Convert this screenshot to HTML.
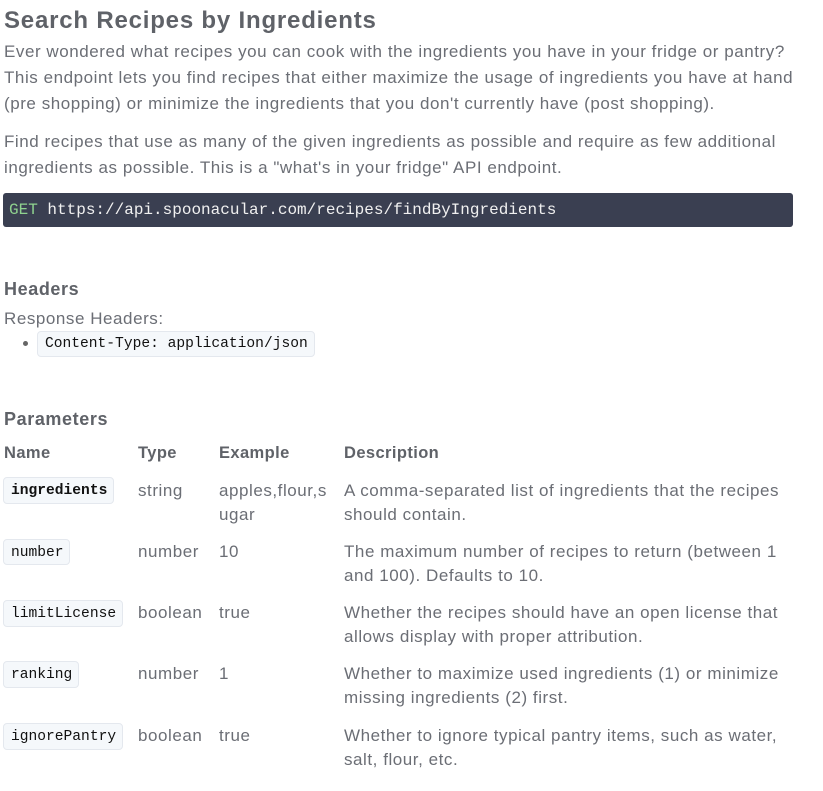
<!DOCTYPE html>
<html><head><meta charset="utf-8"><style>
body{margin:0;width:823px;height:791px;background:#fff;position:relative;overflow:hidden;font-family:"Liberation Sans",sans-serif;color:#6b6e75}
.t{position:absolute;white-space:nowrap;font-size:17px;line-height:24px;letter-spacing:0.55px;margin-top:1px}
.h{position:absolute;white-space:nowrap;font-weight:bold;color:#5f6268}
.pill{position:absolute;background:#f5f8fb;border:1px solid #e4e8ee;border-radius:4px;box-sizing:border-box;font-family:"Liberation Mono",monospace;font-size:14.6px;color:#111;line-height:27px;padding-left:7px}
.code{position:absolute;left:3px;top:193px;width:790px;height:34px;background:#3a3f51;border-radius:3px;font-family:"Liberation Mono",monospace;font-size:16px;line-height:34px;color:#f0f0f0;padding-left:6px;box-sizing:border-box}
</style></head><body>
<div class="h" style="left:4px;top:5px;font-size:24px;line-height:32px;letter-spacing:0.8px">Search Recipes by Ingredients</div>
<div class="t" style="left:4px;top:39px">Ever wondered what recipes you can cook with the ingredients you have in your fridge or pantry?</div>
<div class="t" style="left:4px;top:65px">This endpoint lets you find recipes that either maximize the usage of ingredients you have at hand</div>
<div class="t" style="left:4px;top:91px">(pre shopping) or minimize the ingredients that you don't currently have (post shopping).</div>
<div class="t" style="left:4px;top:129px">Find recipes that use as many of the given ingredients as possible and require as few additional</div>
<div class="t" style="left:4px;top:155px">ingredients as possible. This is a "what's in your fridge" API endpoint.</div>
<div class="code"><span style="color:#8fd28f">GET</span> https://api.spoonacular.com/recipes/findByIngredients</div>
<div class="h" style="left:4px;top:277px;font-size:18px;line-height:24px;letter-spacing:0.6px">Headers</div>
<div class="t" style="left:4px;top:306px">Response Headers:</div>
<div style="position:absolute;left:23px;top:341px;width:5px;height:5px;border-radius:50%;background:#666"></div>
<div class="pill" style="left:37px;top:331px;width:278px;height:26px;line-height:25px;color:#111">Content-Type: application/json</div>
<div class="h" style="left:4px;top:407px;font-size:18px;line-height:24px;letter-spacing:0.6px">Parameters</div>
<div class="h" style="left:4px;top:441px;font-size:16.5px;line-height:24px;letter-spacing:0.4px">Name</div>
<div class="h" style="left:138px;top:441px;font-size:16.5px;line-height:24px;letter-spacing:0.4px">Type</div>
<div class="h" style="left:219px;top:441px;font-size:16.5px;line-height:24px;letter-spacing:0.4px">Example</div>
<div class="h" style="left:344px;top:441px;font-size:16.5px;line-height:24px;letter-spacing:0.4px">Description</div>

<div class="pill" style="left:3px;top:477px;width:111px;height:27px;font-weight:bold">ingredients</div>
<div class="t" style="left:138px;top:478px">string</div>
<div class="t" style="left:219px;top:478px">apples,flour,s</div>
<div class="t" style="left:219px;top:502px">ugar</div>
<div class="t" style="left:344px;top:478px">A comma-separated list of ingredients that the recipes</div>
<div class="t" style="left:344px;top:502px">should contain.</div>

<div class="pill" style="left:3px;top:539px;width:67px;height:26px;line-height:26px">number</div>
<div class="t" style="left:138px;top:539px">number</div>
<div class="t" style="left:219px;top:539px">10</div>
<div class="t" style="left:344px;top:539px">The maximum number of recipes to return (between 1</div>
<div class="t" style="left:344px;top:563px">and 100). Defaults to 10.</div>

<div class="pill" style="left:3px;top:600px;width:120px;height:27px">limitLicense</div>
<div class="t" style="left:138px;top:600px">boolean</div>
<div class="t" style="left:219px;top:600px">true</div>
<div class="t" style="left:344px;top:600px">Whether the recipes should have an open license that</div>
<div class="t" style="left:344px;top:624px">allows display with proper attribution.</div>

<div class="pill" style="left:3px;top:661px;width:76px;height:27px">ranking</div>
<div class="t" style="left:138px;top:661px">number</div>
<div class="t" style="left:219px;top:661px">1</div>
<div class="t" style="left:344px;top:661px">Whether to maximize used ingredients (1) or minimize</div>
<div class="t" style="left:344px;top:685px">missing ingredients (2) first.</div>

<div class="pill" style="left:3px;top:723px;width:120px;height:27px">ignorePantry</div>
<div class="t" style="left:138px;top:723px">boolean</div>
<div class="t" style="left:219px;top:723px">true</div>
<div class="t" style="left:344px;top:723px">Whether to ignore typical pantry items, such as water,</div>
<div class="t" style="left:344px;top:747px">salt, flour, etc.</div>
</body></html>
